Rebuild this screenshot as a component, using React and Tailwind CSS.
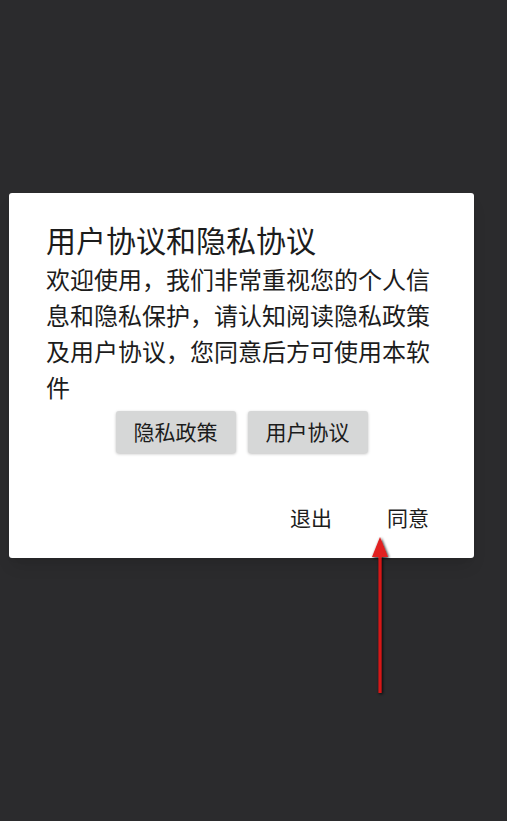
export default function App() {
  return (
    <div
      className="relative min-h-[821px] w-full bg-[#2b2b2d] pt-[193px]"
      style={{ fontFamily: '"Noto Sans CJK SC", "Noto Sans", sans-serif' }}
    >
      <div className="mx-[9px] h-[365px] w-[465px] rounded-[3px] bg-white px-[37px] pt-[30px] shadow-lg">
        <h1 className="text-[30px] leading-[32px] text-[#1c1c1c]">用户协议和隐私协议</h1>
        <p className="mt-[6px] text-[24px] leading-[36px] text-[#1c1c1c]">
          欢迎使用，我们非常重视您的个人信息和隐私保护，请认知阅读隐私政策及用户协议，您同意后方可使用本软件
        </p>
        <div className="mt-[6px] flex justify-center gap-[12px]">
          <button className="h-[42px] w-[120px] rounded-[3px] bg-[#d6d7d7] text-[21px] text-[#1c1c1c] shadow-[0_1px_3px_rgba(0,0,0,0.25)]">
            隐私政策
          </button>
          <button className="h-[42px] w-[120px] rounded-[3px] bg-[#d6d7d7] text-[21px] text-[#1c1c1c] shadow-[0_1px_3px_rgba(0,0,0,0.25)]">
            用户协议
          </button>
        </div>
        <div className="mt-[50px] flex justify-end gap-[55px] pr-[8px]">
          <button className="text-[21px] leading-[28px] text-[#1c1c1c]">退出</button>
          <button className="text-[21px] leading-[28px] text-[#1c1c1c]">同意</button>
        </div>
      </div>
      <svg className="absolute left-[360px] top-[530px]" width="40" height="170" viewBox="0 0 40 170">
        <defs>
          <filter id="s" x="-50%" y="-10%" width="200%" height="120%">
            <feGaussianBlur in="SourceAlpha" stdDeviation="1.5" />
            <feOffset dx="1" dy="1" />
            <feMerge>
              <feMergeNode />
              <feMergeNode in="SourceGraphic" />
            </feMerge>
          </filter>
        </defs>
        <g filter="url(#s)" opacity="0.95">
          <line x1="20" y1="163" x2="20" y2="24" stroke="#e01414" strokeWidth="3" />
          <polygon points="20,7 12,27 28,27" fill="#e01414" />
        </g>
      </svg>
    </div>
  );
}
